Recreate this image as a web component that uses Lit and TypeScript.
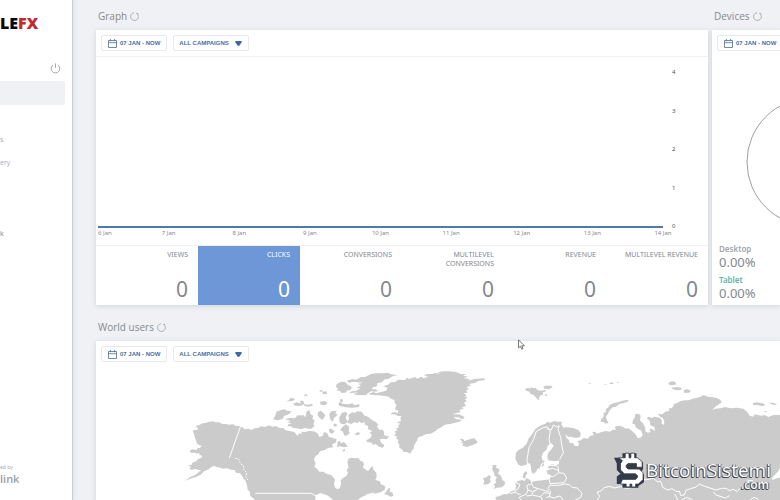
import { LitElement, html, css, svg } from "lit";
import { customElement, property } from "lit/decorators.js";
import { classMap } from "lit/directives/class-map.js";

const calendarIcon = html`<svg class="cal" viewBox="0 0 9 9" aria-hidden="true">
  <path d="M.5 1.5h8v7h-8zM.5 3.7h8M2.4 0v2.2M6.6 0v2.2" fill="none" stroke="currentColor" stroke-width=".8" />
</svg>`;

@customElement("filter-bar")
class FilterBar extends LitElement {
  @property({ type: Boolean }) campaigns = false;
  static styles = css`
    :host { display: flex; gap: 6px; padding: 5px; }
    button {
      display: flex; align-items: center; flex: none; height: 16px; padding: 0 6px; gap: 3px;
      border: 1px solid #e6eaf0; border-radius: 2px; background: #fff; color: #4a6f9f;
      font: 700 6px/8px "Liberation Sans", Arial, sans-serif; white-space: nowrap;
    }
    .wide { padding: 0 6px 0 5px; gap: 6px; }
    .cal { flex: none; width: 9px; height: 9px; }
    .caret { flex: none; width: 7px; height: 6px; }
  `;
  render() {
    return html`
      <button type="button">${calendarIcon}07 JAN - NOW</button>
      ${this.campaigns
        ? html`<button type="button" class="wide">ALL CAMPAIGNS
            <svg class="caret" viewBox="0 0 7 6" aria-hidden="true"><path d="M.4 1h6.2v1.2L4.4 5.8H2.6L.4 2.2z" fill="#3f69a5" /></svg>
          </button>`
        : ""}
    `;
  }
}

@customElement("section-title")
class SectionTitle extends LitElement {
  static styles = css`
    :host { display: block; }
    h2 {
      display: flex; align-items: center; gap: 3px; margin: 0; padding-left: 2px; color: #868a91;
      font: 400 10px/14px "Open Sans", "Noto Sans", sans-serif; white-space: nowrap;
    }
    button { display: flex; padding: 0; border: 0; background: none; color: #9da1a7; }
    svg { width: 9px; height: 9px; }
  `;
  render() {
    return html`<h2><slot></slot>
      <button type="button" aria-label="Refresh">
        <svg viewBox="0 0 9 9"><path d="M6.6 1.3A3.9 3.9 0 1 1 4 .7M6.4 1.4h1.7" fill="none" stroke="currentColor" stroke-width=".8" /></svg>
      </button></h2>`;
  }
}

/* Each group of outlines is drawn on a grid three times finer than the map. */
const northAmerica = svg`<g transform="translate(74 -7) scale(.33333)">
  <path d="M68 210l10 1 7-5-8-8 12-4 9-4 12-2 6-3 14-1 6 3 12 0 9 5 12 0 6 2 14-1 8 4 15 2 13 9 10-2 10 4 8-5 12-1 7-5 14 2 10-5 12 4 10-2 8 5 15 2 6 6 16 3 10 2 10 12 4-8 9 2-2-7 12 1 10-3 16 1 12 7 4 10 10-3 4-12 10 4 4 10 12 4 12 4-3 10-11 5 4 9-16 2-10 6-14 4-6 10-8 4-4 11 5 10-4 12 9 6 6 8 12 0 9 6 14 4 8 8 4 6-3 12 2 10 8 7 8-4 3-12-1-11 8-8 10-6 4-8-4-8 6-10-4-14 3-10 7-4 13 2 10-1 6 8 9 4 2 8-4 8 8 6 8 6 5-8 8-8 4 12 8 8 1 12-4 10 14 4 2 8 14 7-2 10-12 8-20 4-22 3-16 8-14 10-8 9H255l-2-14-12-9-2-14-6-4-2-14-4-12-6-8-6-10-5-6-12-2-4-8-12-1-10-4-14 1-6-3-14-2-4-4-10 4-10 8-12 5-10 10-16 8-8 1-24 10 18-13 15-6 9-8 8-6-8 0-9-3-14 3-4-5 4-4-8-5 10-2 2-6 12-4 4-6 10-4 4-5-10-6 2-4-10 2-3-3-14 0-3-6 8-4 12 2 4-5 8-2 4-6-6-1-8-5z"/>
  <path d="M310 178l7-14 2-9 14-5 10-2 8 4 14 2-8 8-15 6-4 9-16 4zM345 177l18-4 12 2 8-9 18 0 5 6 4-18 8-3 4 12 8 4-3 10 7 4-4 12 4 6-12 8-18-3-10 4-14-3-10-1-8-5-10 0 4-7 10-2-14-3 10-4zM346 125l10-4 6-8 14 4-8 6-14 1zM368 132l12-5 12 4-2-9 10 1 3 8-10 6-16 1zM401 132l10 2 16-2 1 5-14 3-12-3zM400 107l8-5 6 4-9 2zM447 92l8-2 4 3-7 3zM457 95l12-1 3 7-13 2zM450 125l14-2 9 6-8 7-13-2zM444 157l8-5 6 5 8 9-8 14-10-7-5-8zM478 162l6-8 16-2-4 8 7 4-10 9-6 13-7-10zM505 132l6-8 6 7 18 2 12-3 6 5 16-2-2 8-20 2-20-1-18-4zM509 119l6-3 5 8-7 3zM493 190l9 4-4 6-8-2zM476 208l8-2 10 8-7 7-8-3zM515 203l12-10 11 8-2 12 4 6-12 9-6-3-3-10-8-4zM503 244l7-1 2 7 10-4 8 8 3 6-11 2-12-3-9 2zM517 270l7-3 2 5-6 3zM555 222l9-6 7 4-6 5-9 0z"/>
  <path d="M500 72l14-7 12 1 8 9 12 6-4 9-14 2 4 5-17 2-6-7-10 0 7-6-8-5zM530 62l18-5 10 2 15-8 12 0 16-8 16-3 22 0 14-2 10 5 20 3-15 3-14 8-10 1-8 9-14 3-2 10-11 1-4 8 8 1-18 8-8 8-22-1-16-2 16-6-28 3 8-6 14-2 12-7-12-2 14-6-8-6 14-3-16-1-12-2-14 3zM508 184l0-12 8-14 12-3 4 7-5 11 6 12-9 8-11-2zM532 188l5-12-2-11 11-8 10 1 8 9-2 10 8 4-6 8-12-2-8 5zM560 154l15 1 7 11 12 4 12 10 12 7 8 8-6 4 8 10 9 0 6 8-2 7 10 5 7 0-8 9-10-2-11 1 4 11 10 7-4 8-12-3-10-8-8 3-4-7-14-2-2-5 12-7 5-9-7-7 8-5-14-6 2-8-12-6 3-6-12 2-8-6-9 1 3-9-9-4z"/>
  <path d="M642 402l6-6 8-13 5 3-3 8 10 4 2 10-8 2-8-4zM240 383l8 8 8 15-8-4-10-12z"/>
  <path class="line" d="M212 198L178 294M256 400h168l8 5 18 3 8 6"/>
  <path class="sea" d="M436 407l14-8 20 6 10 7 10 8h-54zM574 420l17-17 22-6-13 23z"/>
  <path class="coast" d="M196 295l10 2 6 15 8 4 2 14 8 8-3 12 7 10"/>
</g>`;

const greenland = svg`<g transform="translate(234 -7) scale(.33333)">
  <path d="M138 100l16-4 14-4 5-8-14-6 14-3 10-8 12-1 10-7 20 1 6-7 6 4 18-6 8 5 10-6 9 5 12-5-12-4 10-4 14 0 8-3 16 2-6-4 14-3 20 0 20 2 15 6 16 0-10 5 16 3-14 4 18 4-6 4 20-5 28-2 6 5-20 2-14 7-16 3 6 5-14 4 8 6-8 4 4 7-13 2 10 5-5 5 9 2-9 6 5 5-8 6 6 8-12 5 5 4-13 4 4 7-16 3-9 3 18 0 14 5 5 6-9 4-9-6-16-1 8 6 18 3-8 5-12 3-16 4-16 2-10 8-12 6-6 6-14 7-16 2-9 5-12 4-5 12-7 10-2 12-6 6-4 9-10-5-10 0-5-8-8-5 0-10-6-6 4-7-8-5 4-5-10-4 6-5-4-7 10-3-7-5 10-4-3-6 7-4-10-5 12-4-2-9 3-6-11 0-8-5-12 0 1-4 10-3 10 4 0-9-8 0 0-9 4-6-6-7-1-9-9-3-8-7-12-2-18-2-20-1-10-4 15-5 14-3-9-5-18 0z"/>
  <path d="M389 238l10-2 4 7 9-3 12-4 10-1 4 6 6 6-10 6-12 4-11 4-13-4 2-7-8-1 6-4z"/>
</g>`;

const eurasia = svg`<g transform="translate(384 -37) scale(.33333)">
  <path d="M106 386l2-18 8-8 14-8 10-11 5-14 11-14 10-16 14-10 16-6 6-6 10 3 10-5 12 2 12 0-2 8 5 8-4 20 5 18-1 22 6 14-2 18-12 8-18 3-18-3-3-8 2-14 9-10 8-12-8-8-10 8-3 12-11 9-4 12 2 10 8 4-12 9-3 10-8 4-4 9-9 6-5-9-2-18-5-6-10 6-14 3-8-4z"/>
  <path d="M243 293l17-1 20 2 16 7 7 10-4 11-12 2-14-4-8 1-10-8 5 12 7 4 2 10 9-1 6 9 10 2 3-8-5-8 11-2 8-7 12 2 8-9 10-1-4-10 8-1 6 6 12-4 13-4 14 2 8-6 10 0-4-9 12-3 12 3 10 6 8-1 10 8 10 9 7 12 8 0 7-8-4-14-10-5-8-7-1-7-8-2 2-12 5-6 2-11 10-1 6 6-2 14 8 8 8 14 0 11 8 4 8-2-4-9 8 0 9 6-2-13-12-4-2-14-9-7 6-5 10 4 6-4 18 3 6 9-2 8 8 5 1-10-4-10-8-5-8-8 14 1 9-8 12-3-2-7 8 0 8-8-2-5 12-3 8-5 14-3 12 0 12-5 22-5 10-6 14 5 15 2 10 2 12 5 4 8-8 6-12 8-9 10 10-5 16-1 12-4 18 4 18-2 20 3 12 10 7 11 10 3 6-7 18 4 12-2 10 6 16-6 16 0 12-4 14 4v260H50l-4-14 13-3 13-6 10 1 8-8 15-5 3-10-2-10 8-7 12-3 8 3 5-9 10 5 6 6 16-3 18-1 20-3 4-12-10-5-4-8 9-4-5-8 12-8 14 3 8-4 0-10 10-9 3-14-6-12-1-20-4-14z"/>
  <path d="M38 405l12 0-2 8 11 5-5 13 9 6 4 13 9 6-3 10-8 6-14 1-11 4 6-8-6-4 9-8-3-7 5-8-7-4-2-10-5-9zM10 464l3-12-4-7 12-4 5-6 7 5-3 8 2 8-8 7zM128 441l3-12 8-6 3 7-6 8 2 6-7 1zM185 405l7-6-1 8-5 4zM136 176l9-3 8 4-2-6 10 4 5-2 8 8 10 1 12-2 3 4-11 3 1 7-9 3-3 6 1 9-9-8-4-5-8-6-6-1-2-7-11-3zM190 171l6-4 18 0 4 5-12 6-13-2zM192 195l10-3-2 6zM364 267l8-8-2-9 8-4-1-8 8-6 5-8 12-5 12-2 14-5 16-3 2 4-12 5-16 4-10 8-10 2-10 10-4 9-6 8 2 10 6 9-9 3-5-5-10 0zM565 159l10-5 10 1 4 8-10 3-12-2zM574 173l15-2 14 2 2 6-14 2-12-3zM611 180l12-2 10 5-6 5-14 1zM818 219l14-2 14 3 10 3-6 6-16-3-14-1zM866 219l12-1 14 5-10 2zM850 243l12 1-5 3zM322 160l9-2 3 3zM388 160l9-3 5 4-12 2zM408 158l10-3-4 4zM370 163l8-2 3 3z"/>
  <path class="line" d="M145 426l-4-36 6-38 14-24 8-24 18-10 14-4 10 12-4 28 4 14M200 296l14 4 6-15 10 6 8-4M238 288l-4 10 8 24 4 28 4 18-11 20M204 405l28 3M204 418l14-3 16 6M202 438l18 2 16-12 16 2 8 14-8 14-42 3-4-22M234 408l2 18M212 463l-8 12 8 10-4 14 12 5 20-6 10 12M212 466l24 0 18-4 14 2 8 8 16 2 14 16-4 12-16 8M157 443l-2 18 6 11 24 7 22 6M155 461l-15 6 4 13 14 5 14-6M144 480l-5 12-22 10 7 8M159 487l-3 9-17 2M158 496l24 4 10-12 18 2M182 500l6 10M211 498l-12 5M108 459l12 4-6 14-10 5 7 9 11 2M79 485l14 5 14-3"/>
  <path class="line" d="M352 510l7-11-8-12 14-5 7-9 18-4 12 5 20-4 18 5 12-2-4-13 14-7 18-4 20 0 20-4 12 10 10-1 6 18 16 8 12-4 14 9 9-1 2 12 12-1 5-14 14-5 16-5 10-9 16 7 19 6 15 5 16-5 14 0 11 7 10-4 12 6 10-9 20-4 4-20 14 1"/>
  <path class="line" d="M584 492l10 18M605 510l14-8 18 7M700 486l8 9 28 9 13-7M810 510l12-8 14 6"/>
  <path class="sea" d="M874 447l8-10 13-13 6-14v32l-12 3-9 4z"/>
</g>`;

const metrics = [
  { label: "VIEWS" },
  { label: "CLICKS", active: true },
  { label: "CONVERSIONS" },
  { label: "MULTILEVEL CONVERSIONS" },
  { label: "REVENUE" },
  { label: "MULTILEVEL REVENUE" },
];
const days = [6, 7, 8, 9, 10, 11, 12, 13, 14];

@customElement("app-root")
class AppRoot extends LitElement {
  static styles = css`
    * { box-sizing: border-box; }
    :host {
      display: flex; position: relative; height: 100vh; overflow: hidden; background: #eff1f4;
      color: #85888e; font: 400 7px/9px "Noto Sans", "Open Sans", sans-serif;
    }
    a { color: inherit; text-decoration: none; }
    aside {
      flex: 0 0 73px; display: flex; flex-direction: column; background: #fff;
      border-right: 1px solid #c3ced8; box-shadow: 1px 0 4px #dde3e9;
    }
    .brand { padding-top: 12px; font: 800 16px/22px "Open Sans", sans-serif; color: #080808; }
    .brand span { color: #c3282b; }
    .power { align-self: flex-end; display: flex; margin: 29px 11px 7px 0; padding: 0; border: 0; background: none; color: #a5a8ad; }
    .power svg { width: 11px; height: 11px; }
    nav { display: flex; flex-direction: column; margin-right: 7px; font-family: "Open Sans", sans-serif; }
    nav a { height: 23px; line-height: 23px; color: #a8abb2; }
    nav a.on { height: 24px; background: #f0f1f4; border-radius: 0 2px 2px 0; }
    nav a.last { margin-top: 48px; color: #7c8087; }
    .powered { margin-top: auto; padding-bottom: 14px; color: #a9acb2; font-size: 5px; line-height: 7px; }
    .powered a { display: block; color: #9a9ea7; font: 600 11px/15px "Open Sans", sans-serif; }

    main { flex: 1; min-width: 0; padding: 9px 0 0 23px; display: flex; flex-direction: column; gap: 15px; }
    .top { display: flex; gap: 4px; }
    section { display: flex; flex-direction: column; gap: 7px; }
    .graph { flex: 1; min-width: 0; }
    .devices { flex: 0 0 68px; min-width: 0; }
    .card { background: #fff; box-shadow: 0 1px 5px #cfd2d7; }
    .top .card { flex: 1; }
    .graph filter-bar { border-bottom: 1px solid #eff0f2; }

    .chart { display: grid; grid-template-columns: 1fr 45px; grid-template-rows: auto 1fr; padding: 11px 0 7px 2px; }
    .plot { border-bottom: 2px solid #4f79a9; height: 160px; }
    .scale { grid-area: 1 / 2 / 3 / 3; height: 163px; margin: 0; padding: 0 0 0 9px; display: flex; flex-direction: column; justify-content: space-between; list-style: none; color: #4d4f53; font-size: 6px; }
    .days { display: flex; justify-content: space-between; margin: 0; padding: 1px 0 0; list-style: none; font-size: 6px; }
    .days li { width: 0; display: flex; justify-content: center; white-space: nowrap; }
    .days li:first-child { justify-content: flex-start; }

    .metrics { display: grid; grid-template-columns: repeat(6, 1fr); border-top: 1px solid #eff0f2; }
    .metric {
      height: 59px; padding: 4px 10px 4px 16px; border: 0; background: #fff; color: inherit;
      display: flex; flex-direction: column; justify-content: space-between; align-items: flex-end;
      text-align: right; font: inherit;
    }
    .metric b { font-weight: 400; font-size: 21px; line-height: 24px; }
    .metric.on { background: #6d97d7; color: #fff; }
    .long { white-space: nowrap; }

    .devices .card { overflow: hidden; display: flex; flex-direction: column; }
    .ring { flex: none; display: block; width: 130px; height: 130px; margin: 41px 0 17px 34px; }
    dl { margin: 0; padding-left: 7px; font: 400 13px/16px "Noto Sans", "Open Sans", sans-serif; }
    dt { font-size: 8px; line-height: 10px; font-weight: 600; color: #a3a6ab; }
    dd { margin: 0 0 5px; }
    dd:last-child { margin: 0; }
    .teal { color: #5fb5a6; }

    .map { display: block; width: 100%; fill: #cbcbcb; }
    .map .line { fill: none; stroke: #fff; stroke-width: 3; stroke-linejoin: round; }
    .map .sea { fill: #fff; }
    .map .coast { fill: none; stroke: #fff; stroke-width: 3; stroke-dasharray: 5 4; }

    .mark { position: absolute; right: 9px; bottom: 11px; display: flex; align-items: flex-end; gap: 2px; }
    .mark svg { width: 30px; height: 38px; }
    .mark p {
      margin: 0; color: #fff; font: 400 19px/19px "Open Sans", "Noto Sans", sans-serif; text-align: right;
      text-shadow: -1px 0 #454a56, 0 1px #454a56, 1px 0 #6d717a, -1px 1px #454a56;
    }
    .mark small { display: block; padding-right: 2px; font-size: 12px; line-height: 9px; font-weight: 600; }
    .cursor { position: absolute; left: 518px; top: 339px; width: 7px; height: 11px; }
  `;

  render() {
    return html`
      <aside>
        <div class="brand">LE<span>FX</span></div>
        <button class="power" type="button" aria-label="Log out">
          <svg viewBox="0 0 11 11"><path d="M3.2 2a4.3 4.3 0 1 0 4.6 0M5.5.4v4.4" fill="none" stroke="currentColor" /></svg>
        </button>
        <nav>
          <a href="#" class="on" aria-label="Dashboard"></a>
          <a href="#" aria-label="Campaigns"></a>
          <a href="#">s</a>
          <a href="#">ery</a>
          <a href="#" class="last">k</a>
        </nav>
        <div class="powered">ed by<a href="#">link</a></div>
      </aside>
      <main>
        <div class="top">
          <section class="graph">
            <section-title>Graph</section-title>
            <div class="card">
              <filter-bar campaigns></filter-bar>
              <div class="chart">
                <div class="plot"></div>
                <ul class="scale">${[4, 3, 2, 1, 0].map((n) => html`<li>${n}</li>`)}</ul>
                <ul class="days">${days.map((d) => html`<li>${d} Jan</li>`)}</ul>
              </div>
              <div class="metrics">
                ${metrics.map((m) => html`
                  <button type="button" class=${classMap({ metric: true, on: !!m.active })}>
                    <span class=${classMap({ long: m.label.endsWith("REVENUE") })}>${m.label}</span><b>0</b>
                  </button>`)}
              </div>
            </div>
          </section>
          <section class="devices">
            <section-title>Devices</section-title>
            <div class="card">
              <filter-bar></filter-bar>
              <svg class="ring" viewBox="0 0 130 130"><circle cx="65" cy="65" r="64" fill="none" stroke="#858585" stroke-width=".8" /></svg>
              <dl>
                <dt>Desktop</dt><dd>0.00%</dd>
                <dt class="teal">Tablet</dt><dd>0.00%</dd>
              </dl>
            </div>
          </section>
        </div>
        <section>
          <section-title>World users</section-title>
          <div class="card">
            <filter-bar campaigns></filter-bar>
            <svg class="map" viewBox="0 0 684 133" role="img" aria-label="World map">${northAmerica}${greenland}${eurasia}</svg>
          </div>
        </section>
      </main>
      <div class="mark">
        <svg viewBox="0 0 32 38" aria-hidden="true">
          <path d="M0 6h9V1h15v5l7 5v7l-2 3 3 3v8l-6 4v2H9v-4H3v-8l4-3-4-4v-7z" fill="#343a47" />
          <path d="M5 6h7V1h4v5h2V1h4v5h3l5 4v6h-6v-4H15l-2 2v2l2 2h12l4 4v7l-5 5h-3v3h-4v-3h-2v3h-4v-3H7l2-5h14l2-2v-2l-2-2H11l-4-4v-7l2-3z" fill="#fff" stroke="#343a47" stroke-width=".8" />
        </svg>
        <p>BitcoinSistemi<small>.com</small></p>
      </div>
      <svg class="cursor" viewBox="0 0 7 11" aria-hidden="true"><path d="M.5.8v8l2-1.6 1.2 3 1.3-.6-1.2-2.8h2.6z" fill="#fff" stroke="#555" stroke-width=".8" /></svg>
    `;
  }
}
